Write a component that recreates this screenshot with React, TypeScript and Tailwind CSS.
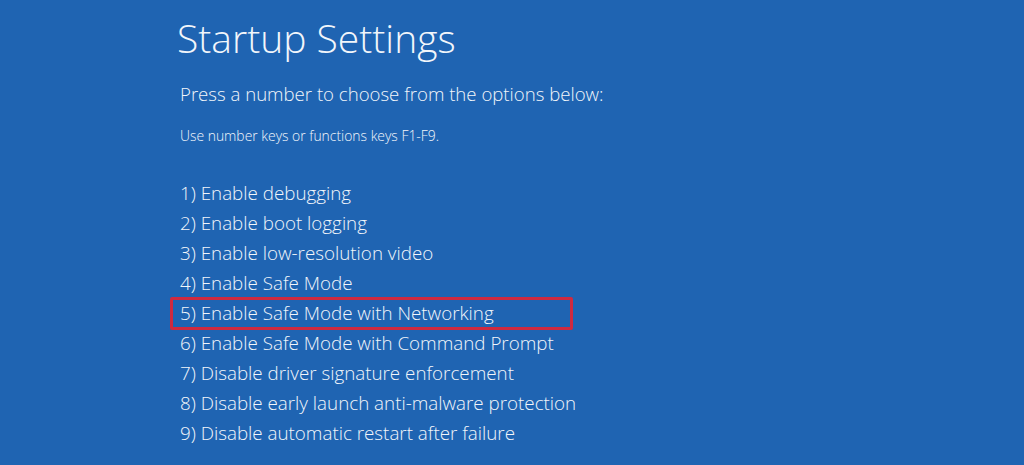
const options = [
  "1) Enable debugging",
  "2) Enable boot logging",
  "3) Enable low-resolution video",
  "4) Enable Safe Mode",
  "5) Enable Safe Mode with Networking",
  "6) Enable Safe Mode with Command Prompt",
  "7) Disable driver signature enforcement",
  "8) Disable early launch anti-malware protection",
  "9) Disable automatic restart after failure",
];

export default function App() {
  return (
    <div
      className="w-[1024px] h-[465px] overflow-hidden bg-[#1f64b2] text-[#f2f6fb]"
      style={{ fontFamily: '"Open Sans", "Noto Sans", sans-serif' }}
    >
      <div className="flex flex-col pl-[180px] pt-[12px]">
        <h1 className="-ml-[3px] text-[39px] font-light leading-[52px]">Startup Settings</h1>
        <p className="mt-[17px] text-[18.6px] font-light leading-[26px]">
          Press a number to choose from the options below:
        </p>
        <p className="mt-[20px] text-[13.9px] font-light leading-[18px]">
          Use number keys or functions keys F1-F9.
        </p>
        <ul className="mt-[33px] flex flex-col">
          {options.map((item, i) => (
            <li
              key={i}
              className={
                i === 4
                  ? "-ml-[10px] -mt-[1px] -mb-[2px] w-[403px] h-[33px] pl-[7px] rounded-[2px] border-[3px] border-[#cf2a40] text-[18.8px] font-light leading-[26px]"
                  : "h-[30px] text-[18.8px] font-light leading-[30px]"
              }
            >
              {item}
            </li>
          ))}
        </ul>
      </div>
    </div>
  );
}
